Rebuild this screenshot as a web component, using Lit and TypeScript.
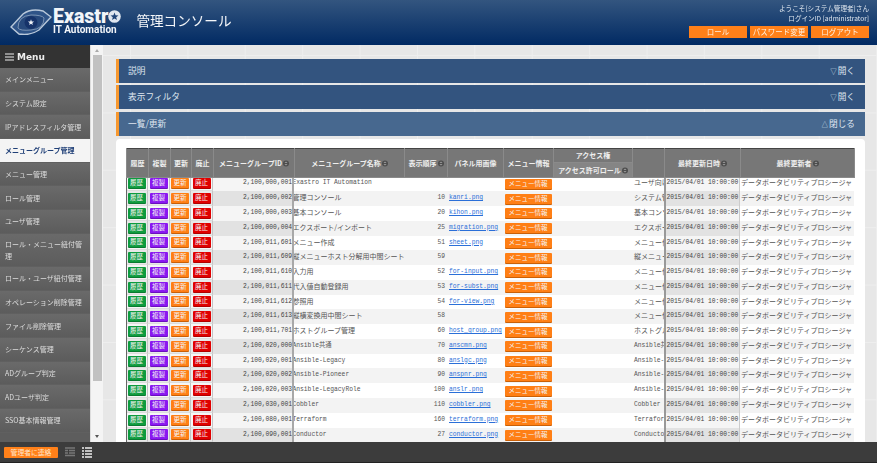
import { LitElement, html, css, svg } from 'lit'
import { customElement } from 'lit/decorators.js'

const menu = [
  'メインメニュー', 'システム設定', 'IPアドレスフィルタ管理', 'メニューグループ管理', 'メニュー管理', 'ロール管理', 'ユーザ管理',
  'ロール・メニュー紐付管理', 'ロール・ユーザ紐付管理', 'オペレーション削除管理', 'ファイル削除管理', 'シーケンス管理',
  'ADグループ判定', 'ADユーザ判定', 'SSO基本情報管理',
]

const rows = [
  ['2,100,000,001', 'Exastro IT Automation', '', '', 'ユーザ向けメニュー'],
  ['2,100,000,002', '管理コンソール', '10', 'kanri.png', 'システム管理'],
  ['2,100,000,003', '基本コンソール', '20', 'kihon.png', '基本コンソール'],
  ['2,100,000,004', 'エクスポート/インポート', '25', 'migration.png', 'エクスポート'],
  ['2,100,011,601', 'メニュー作成', '51', 'sheet.png', 'メニュー作成'],
  ['2,100,011,609', '縦メニューホスト分解用中間シート', '59', '', '縦メニュー'],
  ['2,100,011,610', '入力用', '52', 'for-input.png', 'メニュー作成'],
  ['2,100,011,611', '代入値自動登録用', '53', 'for-subst.png', 'メニュー作成'],
  ['2,100,011,612', '参照用', '54', 'for-view.png', 'メニュー作成'],
  ['2,100,011,613', '縦横変換用中間シート', '58', '', 'メニュー作成'],
  ['2,100,011,701', 'ホストグループ管理', '60', 'host_group.png', 'ホストグループ'],
  ['2,100,020,000', 'Ansible共通', '70', 'anscmn.png', 'Ansible共通'],
  ['2,100,020,001', 'Ansible-Legacy', '80', 'anslgc.png', 'Ansible-Legacy'],
  ['2,100,020,002', 'Ansible-Pioneer', '90', 'anspnr.png', 'Ansible-Pioneer'],
  ['2,100,020,003', 'Ansible-LegacyRole', '100', 'anslr.png', 'Ansible-LegacyRole'],
  ['2,100,030,001', 'Cobbler', '110', 'cobbler.png', 'Cobbler'],
  ['2,100,080,001', 'Terraform', '160', 'terraform.png', 'Terraform'],
  ['2,100,090,001', 'Conductor', '27', 'conductor.png', 'Conductor'],
]

const widths = [22, 22, 21, 22, 81, 110, 43, 56, 50, 79, 32, 76, 114]

const cols = () => html`<colgroup>${widths.map((w) => html`<col style="width:${w}px" />`)}</colgroup>`

const latin = (s: string) => (/^[A-Za-z]/.test(s) ? 'latin' : '')

const sortIcon = html`<svg class="sort" viewBox="0 0 6 7" width="6" height="7">
  <circle cx="3" cy="3.5" r="3" fill="#4d4d4d" />
  <path d="M1.4 3 3 1.4 4.6 3M1.4 4 3 5.6 4.6 4" fill="#999" />
</svg>`

const star = (cx: number, cy: number, r: number, fill: string) => {
  const pts = []
  for (let i = 0; i < 10; i++) {
    const a = -Math.PI / 2 + (i * Math.PI) / 5
    const d = i % 2 ? r * 0.42 : r
    pts.push(`${(cx + d * Math.cos(a)).toFixed(2)},${(cy + d * Math.sin(a)).toFixed(2)}`)
  }
  return svg`<polygon points=${pts.join(' ')} fill=${fill} />`
}

@customElement('app-root')
export class AppRoot extends LitElement {
  static styles = css`
    :host {
      display: block;
      width: 877px;
      height: 470px;
      overflow: hidden;
      background: #fff;
      font-family: "Noto Sans CJK JP", "Liberation Sans", sans-serif;
    }

    .page {
      display: flex;
      flex-direction: column;
      height: 470px;
      filter: blur(0.3px);
    }

    /* header */
    .top {
      flex: none;
      display: flex;
      align-items: flex-start;
      height: 45px;
      box-sizing: border-box;
      background: linear-gradient(#33557f, #012a63);
      color: #fff;
    }
    .logo {
      display: flex;
      align-items: center;
      gap: 1px;
      margin: 8px 0 0 10px;
    }
    .brand {
      display: flex;
      flex-direction: column;
      font-family: Roboto, "Liberation Sans", sans-serif;
      font-weight: 700;
      color: #f2f5f9;
    }
    .brand b {
      display: flex;
      align-items: center;
      font-size: 19.5px;
      line-height: 17px;
    }
    .brand span {
      font-size: 10px;
      line-height: 10px;
    }
    .title {
      margin: 9px 0 0 15px;
      font-size: 13.6px;
      line-height: 22px;
      color: #f4f6f9;
    }
    .user {
      margin-left: auto;
      padding: 3px 8px 0 0;
      display: flex;
      flex-direction: column;
      align-items: flex-end;
      font-size: 6.6px;
      line-height: 10px;
      color: #dfe6ee;
    }
    .user-btns {
      display: flex;
      gap: 3px;
      margin-top: 2.5px;
    }
    .user-btns span {
      width: 58px;
      height: 12px;
      background: #ff8019;
      color: #fff0e0;
      text-align: center;
      font-size: 7.5px;
      line-height: 12px;
    }

    /* middle */
    .mid {
      flex: none;
      display: flex;
      height: 397px;
    }
    .side {
      flex: none;
      width: 90px;
      overflow: hidden;
      background: #5d5d5d;
    }
    .menu-head {
      display: flex;
      align-items: center;
      gap: 3px;
      height: 23px;
      padding-left: 5px;
      background: #333;
      color: #eee;
      font: 700 9px "DejaVu Sans", sans-serif;
    }
    .menu-item {
      display: flex;
      align-items: center;
      box-sizing: border-box;
      min-height: 23.7px;
      padding: 0 3px 0 5px;
      background: linear-gradient(#6a6a6a, #5c5c5c);
      border-bottom: 1px solid #606060;
      color: #ddd;
      font-size: 7px;
      line-height: 12px;
    }
    .menu-item.two {
      min-height: 33px;
    }
    .menu-item.on {
      background: #f4f4f4;
      color: #1f3f77;
      font-weight: 700;
    }
    .bar {
      flex: none;
      width: 13px;
      display: flex;
      flex-direction: column;
      align-items: center;
      background: #f4f4f4;
      border-left: 1px solid #ddd;
      box-sizing: border-box;
    }
    .arrow {
      flex: none;
      width: 0;
      height: 0;
      margin: 4px 0;
      border-left: 2.5px solid transparent;
      border-right: 2.5px solid transparent;
    }
    .arrow.up { border-bottom: 3px solid #aaa; }
    .arrow.down { border-top: 3px solid #555; margin-top: auto; }
    .thumb {
      width: 9px;
      height: 326px;
      margin-top: -1px;
      background: #c1c1c1;
    }

    .main {
      flex: 1;
      min-width: 0;
      display: flex;
      flex-direction: column;
      gap: 2.4px;
      padding: 14px 12px 0 13px;
      background-color: #e7e7e7;
      background-image:
        linear-gradient(90deg, #eeeeee 1px, transparent 1px),
        linear-gradient(#eeeeee 1px, transparent 1px);
      background-size: 57.4px 57.4px;
      background-position: 27px 10px;
    }
    .sec {
      flex: none;
      display: flex;
      align-items: center;
      justify-content: space-between;
      height: 24px;
      padding: 0 10px 1px 9px;
      box-sizing: border-box;
      background: #33547f;
      border-left: 3px solid #f7982f;
      color: #dfe6ef;
      font-size: 8.7px;
    }
    .sec.open {
      background: #47688f;
    }
    .tri {
      font-size: 6.5px;
      margin-right: 1px;
    }
    .card {
      flex: 1;
      min-height: 0;
      margin-top: 0.5px;
      padding: 9px 11px 0 10px;
      background: #fff;
      border-radius: 4px 4px 0 0;
      overflow: hidden;
    }

    /* table head */
    table {
      table-layout: fixed;
      border-collapse: collapse;
      width: 728px;
    }
    .head {
      border-top: 1px solid #444;
    }
    .head th {
      height: 13.5px;
      padding: 0;
      background: #777;
      border: 1px solid #8a8a8a;
      border-top: 0;
      color: #eee;
      font-size: 7px;
      font-weight: 700;
      white-space: nowrap;
    }
    .head th.sub {
      background: #858585;
    }
    .sort {
      margin-left: 1px;
      vertical-align: -1px;
    }

    /* table rows, a grid because table rows snap to whole pixels */
    .rows {
      height: 266px;
      overflow: hidden;
      border-left: 1px solid #666;
      box-sizing: border-box;
      width: 728px;
    }
    .rows-in {
      margin: -1.2px 0 0 -1px;
    }
    .row {
      display: grid;
      grid-template-columns: 22px 22px 21px 22px 81px 110px 43px 56px 50px 79px 32px 76px 114px;
      height: 14.78px;
      background: #fff;
    }
    .row:nth-child(even) {
      background: #f3f3f3;
    }
    .row > div {
      min-width: 0;
      overflow: hidden;
      white-space: nowrap;
      font-size: 7px;
      line-height: 13.4px;
      color: #555;
    }
    .row > .act {
      display: flex;
      align-items: center;
      justify-content: center;
      background: #f6f6f6;
      border-right: 1px solid #c4c4c4;
      border-bottom: 1px solid #ddd;
    }
    .row:nth-child(even) > .act {
      background: #e8e8e8;
    }
    .row > .id,
    .row > .time,
    .row > .num,
    .row > .img,
    .row > .latin {
      font-family: "Liberation Mono", "Noto Sans CJK JP", monospace;
      font-size: 6.3px;
      line-height: 14.4px;
    }
    .row > .id,
    .row > .time {
      background: #f5f5f5;
      color: #444;
    }
    .row > .id {
      text-align: right;
      border-right: 2px solid #a8a8a8;
    }
    .row > .time {
      padding-left: 0.5px;
      border-left: 2px solid #999;
      border-right: 1px solid #ccc;
    }
    .row:nth-child(even) > .id,
    .row:nth-child(even) > .time {
      background: #e2e2e2;
    }
    .row > .by {
      padding-left: 1px;
    }
    .row > .name {
      text-indent: -1.5px;
    }
    .row > .num {
      text-align: right;
      padding-right: 2px;
    }
    .row > .img {
      padding-left: 2px;
      color: #2a6fd8;
      text-decoration: underline;
    }
    .row > .note {
      padding-left: 2px;
    }
    .row > .info {
      display: flex;
      align-items: center;
      justify-content: center;
    }
    .btn {
      display: block;
      width: 18px;
      height: 10px;
      border-radius: 1px;
      color: #f4f4f4;
      font-size: 6.5px;
      line-height: 9px;
      text-align: center;
    }
    .btn.g { background: #0e9b3e; box-shadow: 0 1px 0 #0a7a30; }
    .btn.p { background: #8a18f0; box-shadow: 0 1px 0 #6a10bd; }
    .btn.o { background: #ff7f15; box-shadow: 0 1px 0 #c96008; }
    .btn.r { background: #e00000; box-shadow: 0 1px 0 #b00000; }
    .btn.wide { width: 47px; }

    /* footer */
    .foot {
      flex: none;
      display: flex;
      align-items: center;
      gap: 7px;
      height: 21px;
      padding-left: 4px;
      box-sizing: border-box;
      background: #3c3c3c;
      border-bottom: 1px solid #222;
    }
    .contact {
      width: 54px;
      height: 11px;
      border-radius: 1px;
      background: #ff8019;
      color: #ffe6cc;
      text-align: center;
      font-size: 6.8px;
      line-height: 11px;
    }
  `

  render() {
    return html`
      <div class="page">
        <header class="top">
          <div class="logo">
            <svg width="42" height="26" viewBox="0 0 42 26">
              <path d="M1 18 13 5Q21-1 33 2L41 8 29 21Q20 27 9 25Z" fill="#2f5488" stroke="#b9c8da" stroke-width="1.4" />
              <path d="M8 19Q8 7 21 6 32 6 34 9 34 20 21 21 10 22 8 19Z" fill="#27497c" stroke="#8ea4c0" stroke-width="0.8" />
              <circle cx="21" cy="13.5" r="6.5" fill="#16336a" />
              ${star(21, 13.5, 3.2, '#f2f5f9')}
            </svg>
            <div class="brand">
              <b>Exastr<svg width="13" height="13" viewBox="0 0 13 13">
                <circle cx="6.5" cy="6.5" r="6.3" fill="#dfe6ef" />
                ${star(6.5, 6.7, 4.2, '#1f4478')}
              </svg></b>
              <span>IT Automation</span>
            </div>
          </div>
          <div class="title">管理コンソール</div>
          <div class="user">
            <span>ようこそ[システム管理者]さん</span>
            <span>ログインID [administrator]</span>
            <div class="user-btns">
              <span>ロール</span><span>パスワード変更</span><span>ログアウト</span>
            </div>
          </div>
        </header>

        <div class="mid">
          <nav class="side">
            <div class="menu-head">
              <svg width="9" height="8" viewBox="0 0 9 8"><path d="M0 1h9M0 4h9M0 7h9" stroke="#eee" stroke-width="1.2" /></svg>
              Menu
            </div>
            ${menu.map((m, i) => html`
              <div class="menu-item ${i === 3 ? 'on' : ''} ${i === 7 ? 'two' : ''}">${m}</div>
            `)}
          </nav>
          <div class="bar">
            <i class="arrow up"></i>
            <div class="thumb"></div>
            <i class="arrow down"></i>
          </div>
          <main class="main">
            <div class="sec"><span>説明</span><span><span class="tri">▽</span>開く</span></div>
            <div class="sec"><span>表示フィルタ</span><span><span class="tri">▽</span>開く</span></div>
            <div class="sec open"><span>一覧/更新</span><span><span class="tri">△</span>閉じる</span></div>
            <div class="card">
              <table class="head">
                ${cols()}
                <tr>
                  <th rowspan="2">履歴</th>
                  <th rowspan="2">複製</th>
                  <th rowspan="2">更新</th>
                  <th rowspan="2">廃止</th>
                  <th rowspan="2">メニューグループID${sortIcon}</th>
                  <th rowspan="2">メニューグループ名称${sortIcon}</th>
                  <th rowspan="2">表示順序${sortIcon}</th>
                  <th rowspan="2">パネル用画像</th>
                  <th rowspan="2">メニュー情報</th>
                  <th>アクセス権</th>
                  <th rowspan="2"></th>
                  <th rowspan="2">最終更新日時${sortIcon}</th>
                  <th rowspan="2">最終更新者${sortIcon}</th>
                </tr>
                <tr><th class="sub">アクセス許可ロール${sortIcon}</th></tr>
              </table>
              <div class="rows">
                <div class="rows-in">
                  ${rows.map(([id, name, num, img, note]) => html`
                    <div class="row">
                      <div class="act"><span class="btn g">履歴</span></div>
                      <div class="act"><span class="btn p">複製</span></div>
                      <div class="act"><span class="btn o">更新</span></div>
                      <div class="act"><span class="btn r">廃止</span></div>
                      <div class="id">${id}</div>
                      <div class="name ${latin(name)}">${name}</div>
                      <div class="num">${num}</div>
                      <div class="img">${img}</div>
                      <div class="info"><span class="btn o wide">メニュー情報</span></div>
                      <div></div>
                      <div class="note ${latin(note)}">${note}</div>
                      <div class="time">2015/04/01 10:00:00</div>
                      <div class="by">データポータビリティプロシージャ</div>
                    </div>
                  `)}
                </div>
              </div>
            </div>
          </main>
        </div>

        <footer class="foot">
          <div class="contact">管理者に連絡</div>
          <svg width="10" height="10" viewBox="0 0 10 10">
            <path d="M0 1h10M0 3.5h3M4 3.5h6M0 6h3M4 6h6M0 8.5h10" stroke="#777" stroke-width="1.4" />
          </svg>
          <svg width="10" height="11" viewBox="0 0 10 11">
            <path d="M0 1h2M3 1h7M0 4h2M3 4h7M0 7h2M3 7h7M0 10h2M3 10h7" stroke="#eee" stroke-width="1.6" />
          </svg>
        </footer>
      </div>
    `
  }
}
